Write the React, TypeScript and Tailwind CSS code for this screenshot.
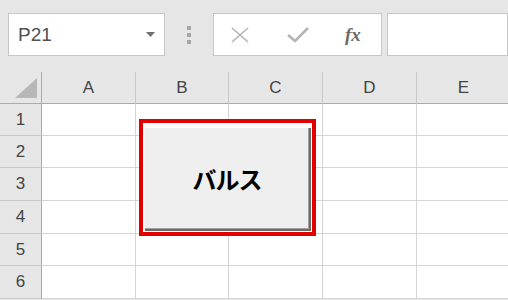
import React from 'react';

const cols = ['A', 'B', 'C', 'D', 'E'];
const rows = [1, 2, 3, 4, 5, 6];

const App: React.FC = () => {
  return (
    <div className="relative w-[508px] h-[300px] overflow-hidden bg-[#e6e6e6] font-['Liberation_Sans','Noto_Sans_CJK_JP',sans-serif]">
      {/* toolbar: name box, dots, formula buttons, formula input */}
      <div className="flex items-start h-[72px] pt-[13px] pl-[8px]">
        <div className="flex items-center justify-between w-[157px] h-[43px] bg-white border border-[#c6c6c6] pl-[9px] pr-[9px]">
          <span className="text-[19px] text-[#505050] leading-none">P21</span>
          <svg width="9" height="5" viewBox="0 0 9 5">
            <path d="M0 0 L9 0 L4.5 5 Z" fill="#6f6f6f" />
          </svg>
        </div>
        <div className="flex flex-col items-center justify-center gap-[3px] w-[48px] h-[43px]">
          <div className="w-[4px] h-[4px] bg-[#a6a6a6]" />
          <div className="w-[4px] h-[4px] bg-[#a6a6a6]" />
          <div className="w-[4px] h-[4px] bg-[#a6a6a6]" />
        </div>
        <div className="flex items-center w-[169px] h-[43px] bg-white border border-[#c6c6c6]">
          <svg className="ml-[16px]" width="20" height="16" viewBox="0 0 20 16">
            <path d="M2 1 L18 15 M18 1 L2 15" stroke="#b4b4b4" strokeWidth="1.6" fill="none" />
          </svg>
          <svg className="ml-[37px]" width="22" height="16" viewBox="0 0 22 16">
            <path d="M1 8 L8 14 L21 1" stroke="#b4b4b4" strokeWidth="2.6" fill="none" />
          </svg>
          <span className="ml-[36px] text-[19px] italic font-bold text-[#6b6b6b] font-['Liberation_Serif',serif] leading-none">fx</span>
        </div>
        <div className="ml-[5px] flex-1 h-[43px] bg-white border border-[#c6c6c6]" />
      </div>

      {/* sheet grid */}
      <div className="grid grid-cols-[42px_94px_93px_94px_94px_94px] grid-rows-[32px_32px_32px_33px_33px_32px_33px] bg-white">
        <div className="relative bg-[#e6e6e6] border-r border-b border-[#ababab]">
          <svg className="absolute left-[15px] top-[6px]" width="22" height="20" viewBox="0 0 22 20">
            <path d="M22 0 L22 20 L0 20 Z" fill="#b7b7b7" />
          </svg>
        </div>
        {cols.map((c) => (
          <div
            key={c}
            className="flex items-center justify-center bg-[#e6e6e6] border-r border-b border-r-[#c9c9c9] border-b-[#ababab] text-[17px] text-[#444444]"
          >
            {c}
          </div>
        ))}
        {rows.map((r) => (
          <React.Fragment key={r}>
            <div className="flex items-center justify-center bg-[#e6e6e6] border-r border-b border-r-[#ababab] border-b-[#c9c9c9] text-[17px] text-[#444444]">
              {r}
            </div>
            {cols.map((c) => (
              <div key={c} className="border-r border-b border-[#d4d4d4]" />
            ))}
          </React.Fragment>
        ))}
      </div>

      {/* drawn button object with red highlight frame */}
      <div className="absolute left-[139px] top-[119px] w-[177px] h-[117px] border-[4px] border-[#e00000] bg-white pt-[5px] pl-[2px] pr-[1px] pb-[1px]">
        <div className="flex items-center justify-center w-full h-full bg-[#efefef] border-r-2 border-b-2 border-r-[#6a6a6a] border-b-[#6a6a6a] shadow-[inset_-1px_-1px_0_#a0a0a0]">
          <span className="text-[24px] font-bold text-black tracking-[-1px] font-['Noto_Sans_CJK_JP',sans-serif]">バルス</span>
        </div>
      </div>
    </div>
  );
};

export default App;
